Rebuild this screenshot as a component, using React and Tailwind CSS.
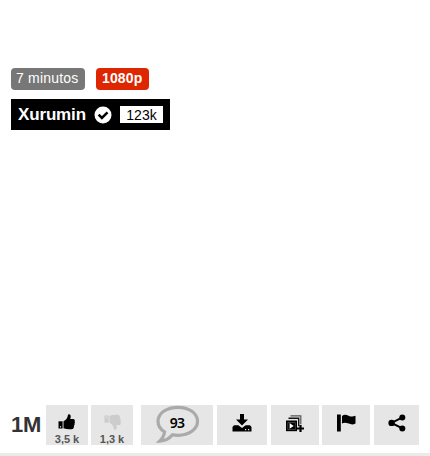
function CheckIcon() {
  return (
    <svg width="18" height="18" viewBox="0 0 18 18" className="ml-2 shrink-0">
      <circle cx="9" cy="9" r="8.5" fill="#fff" />
      <path d="M4.600 8.600l3.300 3.300 5.600-5.600" fill="none" stroke="#000" strokeWidth="2.500" />
    </svg>
  );
}

function ThumbIcon({ className }) {
  return (
    <svg width="17" height="16" viewBox="0 0 17 16" className={className} fill="currentColor">
      <path d="M.5 7.300H4.600V14.500H.5z" />
      <path d="M5.500 7.300c2.600-1.400 3.800-3 4.300-5.500C9.900.7 10.500.2 11.200.3c1.800.4 1.800 2.700 1 4.600l3 .1c1.600.1 1.900 1.600 1.300 2.300.7.8.5 1.800-.1 2.300.4.9.1 1.700-.5 2.100.3 1.900-.6 3.300-2.200 3.500-3.200.3-5.400.1-8.200-.9z" />
      <path d="M1.900 12.200h1.200v1.200H1.900z" fill="#e6e6e6" />
    </svg>
  );
}

function DownloadIcon() {
  return (
    <svg width="20" height="18" viewBox="0 0 20 18" fill="#000">
      <path d="M8 0h4v5.500h4l-6 6-6-6h4z" />
      <path d="M2 11.300h4.300L10 14l3.700-2.700H18l1.500 1.700V17.500H.500V13z" />
      <path d="M13 15h1.200v1.200H13zM16 15h1.200v1.200H16z" fill="#e6e6e6" />
    </svg>
  );
}

function PlaylistIcon() {
  return (
    <svg width="18" height="17" viewBox="0 0 18 17">
      <path d="M4.500.8h10.300v8.500" fill="none" stroke="#555" strokeWidth="1.200" />
      <path d="M2.500 3.300h10.200v8" fill="none" stroke="#111" strokeWidth="1.400" />
      <path d="M0 5.500h11v10.700H0z" fill="#000" />
      <path d="M1.800 7.500h7.500v7H1.800z" fill="none" stroke="#777" strokeWidth=".5" />
      <path d="M3.600 8l4.100 2.900-4.100 2.900z" fill="#fff" />
      <path d="M14.500 10v7M11 13.500h7" stroke="#000" strokeWidth="2.200" />
    </svg>
  );
}

function FlagIcon() {
  return (
    <svg width="20" height="18" viewBox="0 0 20 18" fill="#000">
      <path d="M1 .500h3.800v17H1zM6 1.900c2.200-1.600 4.300-1.200 6.500-.2 2.500 1.100 4.200 1.200 7 .1v7.700c-2.600 1.300-4.300 1.100-6.800.1-2.500-1-4.500-1.300-6.700-.2z" />
    </svg>
  );
}

function ShareIcon() {
  return (
    <svg width="18" height="18" viewBox="0 0 18 18">
      <path d="M14.400 3.400L3.500 8.900l10.900 5.500" fill="none" stroke="#000" strokeWidth="2" />
      <circle cx="14.300" cy="3.400" r="3" />
      <circle cx="3.600" cy="8.900" r="3.200" />
      <circle cx="14.300" cy="14.400" r="3" />
    </svg>
  );
}

function Vote({ count, children, className = "" }) {
  return (
    <button className={`flex h-10 w-[42px] flex-col items-center overflow-hidden bg-[#e6e6e6] pt-[9px] ${className}`}>
      {children}
      <span className="mt-[3px] text-[11px] leading-3 font-bold text-[#555]">{count}</span>
    </button>
  );
}

export default function App() {
  return (
    <main className="flex h-[456px] w-[430px] flex-col overflow-hidden bg-white font-['Liberation_Sans',Arial,sans-serif]">
      <div className="mt-[68px] ml-[11px] flex gap-[11px] text-sm leading-[21px] text-white">
        <span className="h-[22px] w-[74px] rounded bg-[#777] pl-[5px] tracking-[.2px] whitespace-nowrap">7 minutos</span>
        <span className="h-[22px] w-[53px] rounded bg-[#de2600] pl-[6px] font-bold tracking-[.15px]">1080p</span>
      </div>
      <a className="mt-[9px] ml-[11px] flex h-[31px] w-[159px] items-center bg-black pl-[7px] text-white">
        <span className="w-[68px] text-[17px] leading-[31px] font-bold tracking-[-.15px]">Xurumin</span>
        <CheckIcon />
        <span className="ml-2 h-[17px] w-[43px] bg-white text-center text-sm leading-[18px] text-black">123k</span>
      </a>
      <div className="mt-auto mb-2 ml-[11px] flex h-10">
        <strong className="w-[35px] text-[22px] leading-[39px] tracking-[-.3px] text-[#333]">1M</strong>
        <Vote count="3,5 k"><ThumbIcon className="-ml-px text-black" /></Vote>
        <Vote count="1,3 k" className="ml-[3px]"><ThumbIcon className="-scale-y-100 text-[#ccc]" /></Vote>
        <button className="ml-2 grid h-10 w-[72px] place-items-center bg-[#e6e6e6]">
          <svg width="46" height="40" viewBox="0 0 46 40" className="col-start-1 row-start-1">
            <path d="M24 2.300C12.500 2.300 4 8.300 4 16.300c0 4.300 2.400 8.100 6.500 10.600-.4 4-2 6.600-4.800 9.200 5.200-.2 9.800-2.600 12.700-6.300 1.600.4 3.600.5 5.600.5C35 30.300 43.500 24.300 43.500 16.300S35 2.300 24 2.300z" fill="none" stroke="#aaa" strokeWidth="3.200" />
          </svg>
          <span className="col-start-1 row-start-1 -mt-1 font-['Noto_Sans',sans-serif] text-[14px] leading-4 font-semibold tracking-[-.7px] text-black">93</span>
        </button>
        <button className="ml-1 flex h-10 w-[50px] justify-center bg-[#e6e6e6] pt-[9px]"><DownloadIcon /></button>
        <button className="ml-1 flex h-10 w-12 justify-center bg-[#e6e6e6] pt-[10px]"><PlaylistIcon /></button>
        <button className="ml-[3px] flex h-10 w-12 justify-center bg-[#e6e6e6] pt-[9px]"><FlagIcon /></button>
        <button className="ml-1 flex h-10 w-[45px] justify-center bg-[#e6e6e6] pt-[9px]"><ShareIcon /></button>
      </div>
      <div className="h-[3px] shrink-0 bg-[#ebebeb]" />
    </main>
  );
}
